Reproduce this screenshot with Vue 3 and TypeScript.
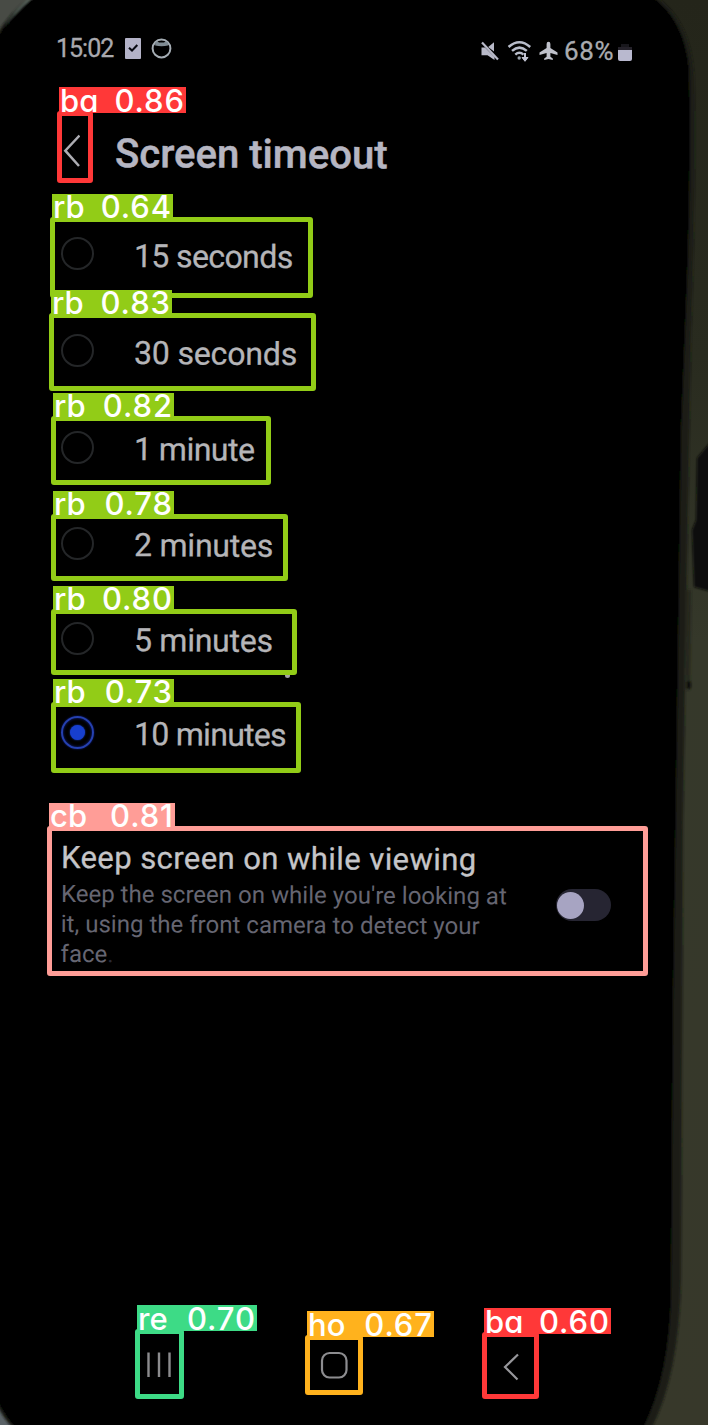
<script setup lang="ts">
import { ref } from 'vue'

interface Detection {
  code: string
  score: string
  color: string
  x: number
  y: number
  w: number
  h: number
  labelW: number
  labelH: number
}

interface Option {
  label: string
  height: number
  spacing: number
}

const options: Option[] = [
  { label: '15 seconds', height: 97, spacing: -0.6 },
  { label: '30 seconds', height: 97, spacing: -0.15 },
  { label: '1 minute', height: 96, spacing: -0.5 },
  { label: '2 minutes', height: 96, spacing: -0.2 },
  { label: '5 minutes', height: 94, spacing: -0.25 },
  { label: '10 minutes', height: 94, spacing: -0.7 },
]
const selected = ref('10 minutes')
const keepOn = ref(false)

const red = '#ff3838'
const lime = '#92cc17'
const detections: Detection[] = [
  { code: 'ba', score: '0.86', color: red, x: 57, y: 111, w: 36, h: 72, labelW: 127, labelH: 26 },
  { code: 'rb', score: '0.64', color: lime, x: 50, y: 217, w: 263, h: 81, labelW: 121, labelH: 25 },
  { code: 'rb', score: '0.83', color: lime, x: 49, y: 313, w: 267, h: 78, labelW: 121, labelH: 25 },
  { code: 'rb', score: '0.82', color: lime, x: 51, y: 416, w: 220, h: 69, labelW: 121, labelH: 25 },
  { code: 'rb', score: '0.78', color: lime, x: 51, y: 514, w: 237, h: 67, labelW: 121, labelH: 25 },
  { code: 'rb', score: '0.80', color: lime, x: 51, y: 609, w: 246, h: 66, labelW: 121, labelH: 25 },
  { code: 'rb', score: '0.73', color: lime, x: 51, y: 702, w: 250, h: 71, labelW: 121, labelH: 25 },
  { code: 'cb', score: '0.81', color: '#ff9d97', x: 47, y: 826, w: 601, h: 150, labelW: 126, labelH: 25 },
  { code: 're', score: '0.70', color: '#3ddb86', x: 135, y: 1329, w: 49, h: 70, labelW: 120, labelH: 26 },
  { code: 'ho', score: '0.67', color: '#ffb21d', x: 305, y: 1335, w: 58, h: 60, labelW: 127, labelH: 26 },
  { code: 'ba', score: '0.60', color: red, x: 482, y: 1332, w: 57, h: 67, labelW: 127, labelH: 26 },
]
</script>

<template>
  <main class="stage">
    <svg class="scene" viewBox="0 0 708 1425" aria-hidden="true">
      <defs>
        <linearGradient id="desk" x1="0" y1="0" x2="0" y2="1">
          <stop offset="0" stop-color="#24251a" />
          <stop offset="0.25" stop-color="#292b1f" />
          <stop offset="0.45" stop-color="#35382a" />
          <stop offset="1" stop-color="#37382a" />
        </linearGradient>
        <filter id="soft"><feGaussianBlur stdDeviation="1.2" /></filter>
      </defs>
      <rect width="708" height="1425" fill="url(#desk)" />
      <rect width="60" height="70" fill="#484b45" />
      <rect y="1380" width="40" height="45" fill="#5b6367" />
      <g filter="url(#soft)">
        <path d="M712 440L697 458L696 520L692 530L694 587L712 592Z" fill="#0c0f0a" />
        <path d="M691 590L690 690L686 690L687 590Z" fill="#25281e" />
        <ellipse cx="689" cy="685" rx="2" ry="4" fill="#0d0f09" />
        <path d="M-10 80V48Q4 14 38 -8H648Q690 14 694 76Q696 180 691 330L687 560L683 820L681 1280Q679 1380 648 1435H20Q-4 1414 -10 1385Z" fill="#1a1f16" />
        <path d="M-8 60Q2 20 36 -6" fill="none" stroke="#65716a" stroke-width="2" />
        <path d="M-4 1390Q2 1412 18 1428" fill="none" stroke="#333a38" stroke-width="3" />
        <path d="M-10 80V54Q2 20 40 -8H644Q684 14 689 70Q691 160 687 280L681 430L677 720L673 1000L671 1290Q670 1376 642 1430H18Q0 1414 -10 1380Z" fill="#000" />
      </g>
    </svg>

    <div class="screen">
      <header class="status">
        <div class="status-left">
          <span class="clock">15:02</span>
          <svg class="icon-task" width="16" height="21" viewBox="0 0 16 21">
            <rect width="16" height="21" rx="1" fill="#b4b3c8" />
            <path d="M4 9.8L7 12.6L12.3 7" fill="none" stroke="#090a12" stroke-width="2.1" />
          </svg>
          <svg class="icon-face" width="21" height="21" viewBox="0 0 21 21">
            <circle cx="10.5" cy="10.5" r="8.9" fill="none" stroke="#a5adb4" stroke-width="2" />
            <path d="M4.2 4.5L6.3 3.2L8 4.5H13L14.8 3.2L17 4.8V7.4Q10.5 9 4.2 7.4Z" fill="#7f8b93" />
          </svg>
        </div>
        <div class="status-right">
          <svg width="20" height="20" viewBox="0 0 20 20">
            <path d="M1.5 6.5H5L14.5 16V19L7.5 14.3H1.5ZM8.2 6L14 1.2V10.5Z" fill="#b8b9c8" />
            <path d="M2 1.5L18 18.4" stroke="#b8b9c8" stroke-width="2.2" />
          </svg>
          <svg class="icon-wifi" width="25" height="23" viewBox="0 0 25 23">
            <g fill="none" stroke="#b8bdca" stroke-width="2.5">
              <path d="M1.6 7Q12.4 -2.5 23.2 7" />
              <path d="M5 10.9Q12.4 4.3 19.8 10.9" />
              <path d="M8.3 14.6Q12.4 10.9 16.5 14.6" />
            </g>
            <circle cx="12.2" cy="18" r="1.7" fill="#98a1ab" />
            <path d="M18 13V19" stroke="#c2c4d2" stroke-width="2" />
            <path d="M15 17.5H21L18 21.3Z" fill="#c2c4d2" stroke="#c2c4d2" />
          </svg>
          <svg class="icon-plane" width="19" height="20" viewBox="0 0 19 20">
            <path d="M9.5 .8Q11.4 .8 11.4 3V7L18.5 11.6V14L11.4 12V15.8L13.8 17.4V19L9.5 18L5.2 19V17.4L7.6 15.8V12L.5 14V11.6L7.6 7V3Q7.6 .8 9.5 .8Z" fill="#bfc1ca" />
          </svg>
          <span class="percent">68%</span>
          <svg class="icon-battery" width="14" height="17" viewBox="0 0 14 17">
            <rect x="3" width="8" height="3" fill="#18171c" />
            <rect y="3" width="14" height="3" fill="#242129" />
            <path d="M0 6H14V15Q14 17 12 17H2Q0 17 0 15Z" fill="#b9b9cf" />
          </svg>
        </div>
      </header>

      <div class="title-bar">
        <svg class="back" width="18" height="34" viewBox="0 0 18 34">
          <path d="M17.5 1.5L3.3 16.7L17 32" fill="none" stroke="#adadb3" stroke-width="2.5" />
        </svg>
        <h1>Screen timeout</h1>
      </div>

      <ul class="options">
        <li
          v-for="o in options"
          :key="o.label"
          :style="{ height: o.height + 'px' }"
          @click="selected = o.label"
        >
          <span class="radio" :class="{ on: selected === o.label }"></span>
          <span class="option-text" :style="{ letterSpacing: o.spacing + 'px' }">{{ o.label }}</span>
        </li>
      </ul>

      <section class="keep">
        <div class="keep-text">
          <h2>Keep screen on while viewing</h2>
          <p>
            <span>Keep the screen on while you're looking at</span>
            <span>it, using the front camera to detect your</span>
            <span>face<i>.</i></span>
          </p>
        </div>
        <button class="switch" :class="{ on: keepOn }" aria-label="Keep screen on" @click="keepOn = !keepOn"></button>
      </section>

      <nav class="nav">
        <svg width="26" height="26" viewBox="0 0 26 26">
          <path d="M2.5 .5V25M13 .5V25M23.5 .5V25" stroke="#8c8c8e" stroke-width="2.4" />
        </svg>
        <svg class="home" width="28" height="28" viewBox="0 0 28 28">
          <rect x="2" y="2" width="24.5" height="24.5" rx="7.5" fill="none" stroke="#8d8d90" stroke-width="2.2" />
        </svg>
        <svg class="nav-back" width="17" height="28" viewBox="0 0 17 28">
          <path d="M15 1.5L2 14L14.5 26.5" fill="none" stroke="#97979b" stroke-width="2.2" />
        </svg>
      </nav>
    </div>

    <i class="speck"></i>

    <div
      v-for="(d, i) in detections"
      :key="i"
      class="detection"
      :style="{ left: d.x + 'px', top: d.y + 'px', width: d.w + 'px', height: d.h + 'px', borderColor: d.color }"
    >
      <div class="tag" :style="{ width: d.labelW + 'px', height: d.labelH + 'px', background: d.color }">
        <span>{{ d.code }}</span><span class="score">{{ d.score }}</span>
      </div>
    </div>
  </main>
</template>

<style>
body {
  margin: 0;
  background: #000;
}
</style>

<style scoped>
.stage {
  position: relative;
  width: 708px;
  height: 1425px;
  overflow: hidden;
  font-family: Roboto, "Liberation Sans", sans-serif;
}
.scene {
  position: absolute;
  inset: 0;
  width: 708px;
  height: 1425px;
}
.screen {
  position: relative;
  display: flex;
  flex-direction: column;
  width: 660px;
  height: 1425px;
}
svg {
  display: block;
  flex: none;
}
.status {
  display: flex;
  justify-content: space-between;
  height: 30px;
  padding: 36px 28px 0 56px;
}
.status-left,
.status-right {
  display: flex;
  align-items: center;
  height: 24px;
}
.status-right {
  margin-top: 3px;
}
.clock {
  width: 69px;
  font-size: 25px;
  letter-spacing: -1px;
  color: #a9a9ae;
  -webkit-text-stroke: 0.3px #a9a9ae;
}
.icon-face {
  margin-left: 10px;
}
.icon-wifi {
  margin-left: 7px;
}
.icon-plane {
  margin-left: 7px;
}
.percent {
  width: 54px;
  margin-left: 6px;
  font-size: 26px;
  letter-spacing: 0.7px;
  color: #aaabb0;
  -webkit-text-stroke: 0.3px #aaabb0;
}
.icon-battery {
  margin-top: 3px;
}
.title-bar {
  display: flex;
  align-items: center;
  height: 76px;
  margin-top: 48px;
  padding-left: 62px;
}
.back {
  margin-bottom: 3px;
}
h1 {
  margin: 4px 0 0 35px;
  font-size: 40px;
  font-weight: 500;
  line-height: 48px;
  letter-spacing: 0.05px;
  color: #b6b6c2;
  -webkit-text-stroke: 0.5px #b6b6c2;
  transform: rotate(0.3deg);
  transform-origin: left center;
}
.options {
  margin: 15px 0 0;
  padding: 0 0 0 61px;
  list-style: none;
}
.options li {
  display: flex;
  align-items: center;
}
.radio {
  display: grid;
  place-items: center;
  width: 33px;
  height: 33px;
  box-sizing: border-box;
  border: 2px solid #242628;
  border-radius: 50%;
}
.radio.on {
  border-color: #2540b0;
  box-shadow: 0 0 2px #10208a, inset 0 0 3px #10208a;
}
.radio.on::after {
  content: "";
  width: 15px;
  height: 15px;
  border-radius: 50%;
  background: #173fce;
  box-shadow: 0 0 2px #173fce;
}
.option-text {
  margin: 4px 0 0 40px;
  font-size: 32px;
  line-height: 40px;
  color: #b5b5b8;
  -webkit-text-stroke: 0.3px #b5b5b8;
  transform: rotate(0.4deg);
  transform-origin: left center;
}
.keep {
  display: flex;
  align-items: flex-start;
  justify-content: space-between;
  height: 136px;
  margin-top: 60px;
  padding: 0 49px 0 61px;
}
h2 {
  margin: 0;
  font-size: 31px;
  font-weight: 400;
  line-height: 38px;
  letter-spacing: 0.43px;
  white-space: nowrap;
  color: #c5c5c8;
  -webkit-text-stroke: 0.3px #c5c5c8;
  transform: rotate(0.3deg);
  transform-origin: left center;
}
p {
  margin: 2px 0 0;
  font-size: 24px;
  line-height: 30px;
  color: #666672;
  transform: rotate(0.3deg);
  transform-origin: left top;
}
p span {
  display: block;
  white-space: nowrap;
  letter-spacing: 0.02px;
}
p i {
  font-style: normal;
  color: #292936;
}
.switch {
  display: flex;
  align-items: center;
  width: 55px;
  height: 32px;
  margin-top: 50px;
  padding: 0 1px;
  border: 0;
  border-radius: 16px;
  background: #262532;
}
.switch.on {
  justify-content: flex-end;
}
.switch::before {
  content: "";
  width: 27px;
  height: 27px;
  border-radius: 50%;
  background: #a7a4c2;
}
.nav {
  display: flex;
  align-items: center;
  height: 28px;
  margin-top: 376px;
  padding-left: 146px;
}
.home {
  margin-left: 148px;
}
.nav-back {
  margin: 3px 0 0 155px;
}
.speck {
  position: absolute;
  left: 285px;
  top: 673px;
  width: 5px;
  height: 5px;
  border-radius: 50%;
  background: #a5a5a8;
}
.detection {
  position: absolute;
  box-sizing: border-box;
  border: 5px solid;
  border-radius: 3px;
}
.tag {
  position: absolute;
  left: -3px;
  bottom: calc(100% + 3px);
  box-sizing: border-box;
  display: flex;
  align-items: center;
  justify-content: space-between;
  padding: 1px 2px 0 1px;
  font-family: Inter, "Liberation Sans", sans-serif;
  font-feature-settings: "cv11";
  font-size: 31px;
  font-weight: 500;
  line-height: 26px;
  color: #fff;
}
.score {
  letter-spacing: 0.9px;
  margin-right: -0.9px;
}
</style>
